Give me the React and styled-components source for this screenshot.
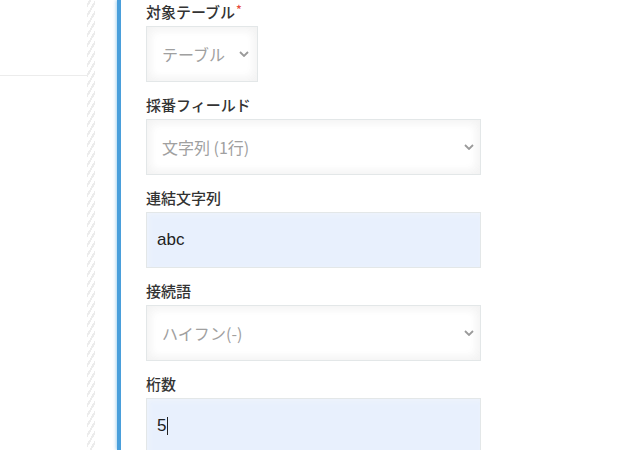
import React from "react";
import styled, { createGlobalStyle } from "styled-components";

const GlobalStyle = createGlobalStyle`
  html, body {
    margin: 0;
    padding: 0;
    background: #fff;
    font-family: "Liberation Sans", "Noto Sans CJK JP", sans-serif;
    overflow: hidden;
  }
`;

const Page = styled.div`
  display: flex;
  height: 450px;
  width: 623px;
`;

const SidePane = styled.div`
  width: 87px;
  flex-shrink: 0;
`;

const SideHeader = styled.div`
  height: 75px;
  border-bottom: 1px solid #ececec;
`;

const Hatch = styled.div`
  width: 8px;
  flex-shrink: 0;
  background: repeating-linear-gradient(
    -60deg,
    #fff 0px,
    #fff 3px,
    #ececec 3px,
    #ececec 5px
  );
`;

const Spacer = styled.div`
  width: 22px;
  flex-shrink: 0;
`;

const FormPanel = styled.div`
  flex: 1;
  border-left: 4px solid #4a9fdb;
  box-shadow: -1px 0 3px rgba(74, 159, 219, 0.45);
  padding: 2px 0 0 25px;
`;

const Field = styled.div`
  margin-bottom: 13px;
`;

const Label = styled.div`
  font-family: "Noto Sans CJK JP", sans-serif;
  font-size: 15px;
  font-weight: 500;
  line-height: 20px;
  color: #333;
  margin-bottom: 4px;
  white-space: nowrap;
`;

const Required = styled.span`
  color: #e74c3c;
  font-size: 12px;
  vertical-align: top;
  position: relative;
  top: -3px;
  margin-left: 1px;
`;

const SelectBox = styled.div`
  box-sizing: border-box;
  position: relative;
  width: ${p => p.width}px;
  height: 56px;
  border: 1px solid #e3e7e8;
  background: #fff;
  box-shadow: 1px 1px 12px #f2f2f2 inset, -1px -1px 12px #f2f2f2 inset;
  display: flex;
  align-items: center;
  padding: 0 30px 0 15px;
  font-family: "Noto Sans CJK JP", sans-serif;
  font-size: 16px;
  color: #a0a0a0;
  white-space: nowrap;
`;

const Chevron = styled.svg`
  position: absolute;
  right: ${p => p.right}px;
  top: 50%;
  margin-top: -3px;
`;

const InputBox = styled.div`
  box-sizing: border-box;
  width: 335px;
  height: 56px;
  border: 1px solid #e3e7e8;
  background: #e8f0fd;
  box-shadow: 2px 2px 4px #eef3fb inset;
  display: flex;
  align-items: center;
  padding: 0 10px;
  font-family: "Liberation Sans", sans-serif;
  font-size: 17px;
  color: #222;
`;

const Caret = styled.span`
  display: inline-block;
  width: 1px;
  height: 18px;
  background: #222;
  margin-left: 1px;
`;

const Arrow = ({ right }) => (
  <Chevron right={right} width="10" height="6" viewBox="0 0 10 6">
    <path d="M1 1l4 4 4-4" fill="none" stroke="#9a9a9a" strokeWidth="1.8" />
  </Chevron>
);

export default function App() {
  return (
    <>
      <GlobalStyle />
      <Page>
        <SidePane>
          <SideHeader />
        </SidePane>
        <Hatch />
        <Spacer />
        <FormPanel>
          <Field>
            <Label>
              対象テーブル<Required>*</Required>
            </Label>
            <SelectBox width={112}>
              テーブル
              <Arrow right={8} />
            </SelectBox>
          </Field>
          <Field>
            <Label>採番フィールド</Label>
            <SelectBox width={335}>
              文字列 (1行)
              <Arrow right={6} />
            </SelectBox>
          </Field>
          <Field>
            <Label>連結文字列</Label>
            <InputBox>abc</InputBox>
          </Field>
          <Field>
            <Label>接続語</Label>
            <SelectBox width={335}>
              ハイフン(-)
              <Arrow right={6} />
            </SelectBox>
          </Field>
          <Field>
            <Label>桁数</Label>
            <InputBox>
              5<Caret />
            </InputBox>
          </Field>
        </FormPanel>
      </Page>
    </>
  );
}
